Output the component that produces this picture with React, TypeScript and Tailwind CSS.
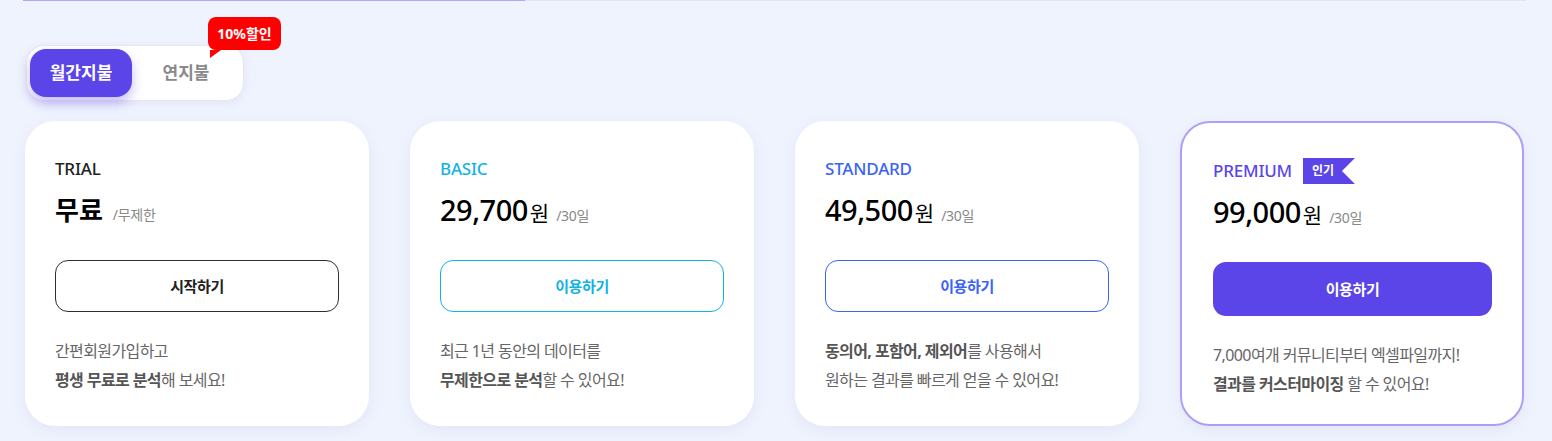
import React, { useState } from 'react';

type Plan = {
  name: string;
  nameColor: string;
  price: string;
  unit?: string;
  period: string;
  button: string;
  buttonClass: string;
  line1: React.ReactNode;
  line2: React.ReactNode;
  popular?: boolean;
};

const plans: Plan[] = [
  {
    name: 'TRIAL',
    nameColor: 'text-[#222222]',
    price: '무료',
    period: '/무제한',
    button: '시작하기',
    buttonClass: 'h-[52px] border border-[#2b2f3a] text-[#222] bg-white',
    line1: <>간편회원가입하고</>,
    line2: (
      <>
        <b className="font-bold text-[#555]">평생 무료로 분석</b>해 보세요!
      </>
    ),
  },
  {
    name: 'BASIC',
    nameColor: 'text-[#13b3e2]',
    price: '29,700',
    unit: '원',
    period: '/30일',
    button: '이용하기',
    buttonClass: 'h-[52px] border border-[#13b3e2] text-[#13b3e2] bg-white',
    line1: <>최근 1년 동안의 데이터를</>,
    line2: (
      <>
        <b className="font-bold text-[#555]">무제한으로 분석</b>할 수 있어요!
      </>
    ),
  },
  {
    name: 'STANDARD',
    nameColor: 'text-[#3b63f6]',
    price: '49,500',
    unit: '원',
    period: '/30일',
    button: '이용하기',
    buttonClass: 'h-[52px] border border-[#3b63f6] text-[#3b63f6] bg-white',
    line1: (
      <>
        <b className="font-bold text-[#555]">동의어, 포함어, 제외어</b>를 사용해서
      </>
    ),
    line2: <>원하는 결과를 빠르게 얻을 수 있어요!</>,
  },
  {
    name: 'PREMIUM',
    nameColor: 'text-[#5b45e8]',
    price: '99,000',
    unit: '원',
    period: '/30일',
    button: '이용하기',
    buttonClass: 'h-[54px] bg-[#5b45e8] text-white',
    line1: <>7,000여개 커뮤니티부터 엑셀파일까지!</>,
    line2: (
      <>
        <b className="font-bold text-[#555]">결과를 커스터마이징</b> 할 수 있어요!
      </>
    ),
    popular: true,
  },
];

const PlanCard: React.FC<{ plan: Plan }> = ({ plan }) => {
  return (
    <div
      className={`min-w-0 h-[305px] rounded-[30px] bg-white px-[30px] pt-[36px] shadow-[0_4px_14px_rgba(120,130,180,0.10)] ${
        plan.popular ? 'border-2 border-[#ab9ff8] pl-[31px]' : ''
      }`}
    >
      {/* 플랜 이름 */}
      <div className="flex items-center h-6">
        <span className={`text-[17px] leading-6 font-medium tracking-[-0.2px] ${plan.nameColor}`}>
          {plan.name}
        </span>
        {plan.popular && (
          <span className="ml-[11px] flex h-[26px] w-[52px] items-center pl-[9px] bg-[#5b45e8] text-white text-[12px] font-bold [clip-path:polygon(0_0,100%_0,75%_50%,100%_100%,0_100%)]">
            인기
          </span>
        )}
      </div>

      {/* 가격 */}
      <div className="mt-[11px] flex items-baseline h-9">
        <span
          className={`text-black leading-9 ${
            plan.unit ? 'text-[29px] font-medium tracking-[-0.5px]' : 'text-[26px] font-bold'
          }`}
        >
          {plan.price}
        </span>
        {plan.unit && <span className="text-[21px] text-black ml-[2px]">{plan.unit}</span>}
        <span className={`${plan.unit ? 'ml-[7px]' : 'ml-[10px]'} text-[14px] text-[#888] tracking-[-0.3px]`}>
          {plan.period}
        </span>
      </div>

      {/* 버튼 */}
      <button
        className={`mt-[32px] w-full rounded-[13px] text-[15px] font-bold tracking-[-0.4px] ${plan.buttonClass}`}
      >
        {plan.button}
      </button>

      {/* 설명 */}
      <div className="mt-[25px] text-[16px] leading-[29px] text-[#666] tracking-[-0.6px] whitespace-nowrap">
        <p>{plan.line1}</p>
        <p>{plan.line2}</p>
      </div>
    </div>
  );
};

const App: React.FC = () => {
  const [yearly, setYearly] = useState(false);

  return (
    <div
      className="w-[1552px] h-[441px] overflow-hidden bg-[#eff3fe]"
      style={{ fontFamily: '"Noto Sans", "Noto Sans CJK KR", sans-serif' }}
    >
      {/* 진행 바 */}
      <div className="ml-[23px] w-[1503px] h-px bg-[#e0e5f5] flex">
        <div className="w-[502px] h-px bg-[#b2a8fa]" />
      </div>

      {/* 결제 주기 토글 */}
      <div className="pl-[26px] pt-[44px]">
        <div className="relative w-[218px] h-[56px] rounded-[18px] bg-white border border-[#e6e8ef] shadow-[0_2px_8px_rgba(120,130,180,0.12)] flex items-center px-[3px]">
          <button
            onClick={() => setYearly(false)}
            className={`w-[102px] h-[48px] rounded-[16px] text-[17px] font-bold ${
              !yearly ? 'bg-[#5b45e8] text-white shadow-[0_6px_12px_rgba(91,69,232,0.35)]' : 'text-[#888]'
            }`}
          >
            월간지불
          </button>
          <button
            onClick={() => setYearly(true)}
            className={`flex-1 h-[48px] rounded-[16px] text-[17px] font-bold ${
              yearly ? 'bg-[#5b45e8] text-white' : 'text-[#8a8a8a]'
            }`}
          >
            연지불
          </button>

          {/* 할인 배지 */}
          <div className="absolute left-[181px] top-[-29px]">
            <div className="h-[33px] w-[73px] rounded-[8px] bg-[#ff0000] flex items-center justify-center text-white text-[14px] font-bold">
              10%할인
            </div>
            <div className="ml-[2px] h-[8px] w-[11px] bg-[#ff0000] [clip-path:polygon(0_0,100%_0,0_100%)]" />
          </div>
        </div>
      </div>

      {/* 요금제 카드 */}
      <div className="mt-[20px] pl-[25px] pr-[28px] grid grid-cols-4 gap-[41px]">
        {plans.map((plan) => (
          <PlanCard key={plan.name} plan={plan} />
        ))}
      </div>
    </div>
  );
};

export default App;
